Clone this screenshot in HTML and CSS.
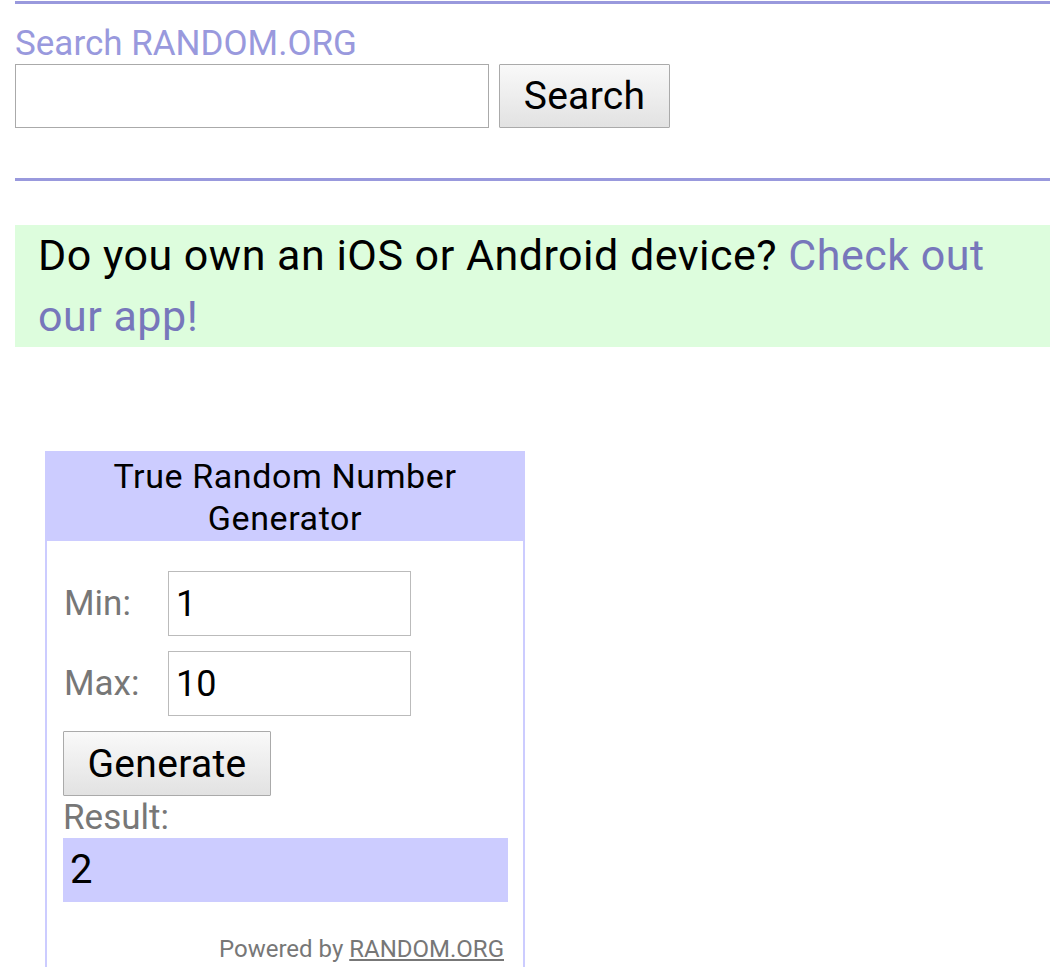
FILE: index.html
```html
<!DOCTYPE html>
<html lang="en">
<head>
    <meta charset="UTF-8">
    <meta name="viewport" content="width=device-width, initial-scale=1.0">
    <title>RANDOM.ORG - True Random Number Service</title>
    <link rel="stylesheet" href="styles.css">
</head>
<body>
    <hr class="rule rule-top">

    <div class="search">
        <div class="search-title">Search RANDOM.ORG</div>
        <form class="search-form" onsubmit="return false;">
            <input type="text" class="search-input" />
            <button class="btn search-btn">Search</button>
        </form>
    </div>

    <hr class="rule rule-bottom">

    <div class="app-banner">
        Do you own an iOS or Android device? <a href="#">Check out our app!</a>
    </div>

    <div class="widget">
        <div class="widget-head">True Random Number Generator</div>
        <div class="widget-body">
            <div class="field">
                <label for="minInput">Min:</label>
                <input type="text" id="minInput" value="1" />
            </div>
            <div class="field">
                <label for="maxInput">Max:</label>
                <input type="text" id="maxInput" value="10" />
            </div>
            <button class="btn gen-btn" onclick="generate()">Generate</button>
            <div class="result-label">Result:</div>
            <div class="result" id="result">2</div>
            <div class="powered">Powered by <a href="#">RANDOM.ORG</a></div>
        </div>
    </div>

    <script>
        function generate() {
            const min = parseInt(document.getElementById('minInput').value) || 0;
            const max = parseInt(document.getElementById('maxInput').value) || 0;
            const n = Math.floor(Math.random() * (max - min + 1)) + min;
            document.getElementById('result').textContent = n;
        }
    </script>
</body>
</html>
```

FILE: styles.css
```css
body {
    font-family: Roboto, "Liberation Sans", Arial, sans-serif;
    margin: 0 0 0 15px;
    background: #fff;
    color: #000;
}
.rule {
    border: none;
    border-top: 3px solid #9999dd;
    margin: 0;
}
.rule-top {
    margin-top: 1px;
}
.rule-bottom {
    margin-top: 50px;
}
.search {
    margin-top: 20px;
}
.search-title {
    font-size: 35px;
    color: #9999dd;
    line-height: 40px;
}
.search-form {
    display: flex;
    margin: 0;
}
.search-input {
    width: 474px;
    height: 64px;
    box-sizing: border-box;
    border: 1px solid #aaa;
    margin: 0;
    font-size: 34px;
}
.btn {
    font-family: Roboto, "Liberation Sans", Arial, sans-serif;
    font-size: 39px;
    letter-spacing: 0.3px;
    color: #000;
    height: 65px;
    box-sizing: border-box;
    padding: 0 20px;
    border: 1px solid #aaa;
    border-radius: 1px;
    background: linear-gradient(#f9f9f9, #e2e2e2);
    cursor: pointer;
}
.search-btn {
    margin-left: 10px;
    width: 171px;
    height: 64px;
}
.app-banner {
    margin-top: 44px;
    background: #ddfddd;
    font-size: 43px;
    letter-spacing: 0.5px;
    line-height: 61px;
    padding: 0 23px;
}
.app-banner a {
    color: #7777bb;
    text-decoration: none;
}
.widget {
    margin: 104px 0 0 30px;
    width: 480px;
    box-sizing: border-box;
    border: 2px solid #ccccff;
}
.widget-head {
    background: #ccccff;
    text-align: center;
    font-size: 34px;
    letter-spacing: 0.6px;
    line-height: 42px;
    padding: 2px 20px;
}
.widget-body {
    padding: 30px 15px 20px 16px;
}
.field {
    display: flex;
    align-items: center;
    margin-bottom: 15px;
}
.field label {
    width: 104px;
    padding-left: 1px;
    font-size: 35px;
    line-height: 65px;
    color: #777;
}
.field input {
    width: 243px;
    height: 65px;
    box-sizing: border-box;
    border: 1px solid #bbb;
    padding: 0 7px;
    font-family: Roboto, "Liberation Sans", Arial, sans-serif;
    font-size: 36px;
    color: #000;
}
.gen-btn {
    width: 208px;
}
.result-label {
    margin-top: 1px;
    font-size: 35px;
    color: #777;
}
.result {
    background: #ccccff;
    height: 64px;
    line-height: 64px;
    font-size: 40px;
    padding-left: 7px;
}
.powered {
    margin-top: 33px;
    text-align: right;
    padding-right: 4px;
    font-size: 24px;
    color: #777;
}
.powered a {
    color: #777;
}
```
